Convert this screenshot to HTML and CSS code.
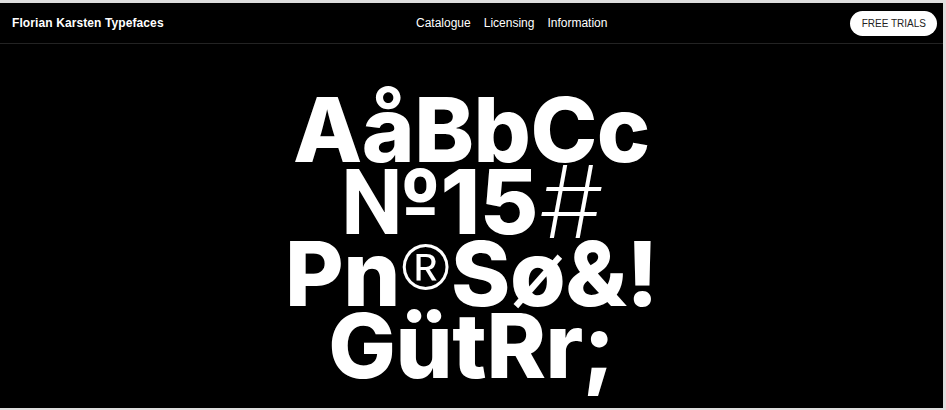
FILE: index.html
```html
<!DOCTYPE html>
<html lang="en">
<head>
<meta charset="utf-8">
<title>Florian Karsten Typefaces</title>
<link rel="stylesheet" href="styles.css">
</head>
<body>
<div class="frame">
  <header class="header">
    <a class="logo" href="#">Florian Karsten Typefaces</a>
    <nav class="nav">
      <a href="#">Catalogue</a>
      <a href="#">Licensing</a>
      <a href="#">Information</a>
    </nav>
    <a class="trials" href="#">FREE TRIALS</a>
  </header>
  <main class="hero">
    <div class="specimen">
      <div class="line">AåBbCc</div>
      <div class="line">№15<span class="hash">#</span></div>
      <div class="line">Pn<span class="reg">®</span>Sø&amp;!</div>
      <div class="line">GütRr;</div>
    </div>
  </main>
</div>
</body>
</html>
```
FILE: styles.css
```css
html, body {
  margin: 0;
  padding: 0;
}
body {
  background: #dedede;
  font-family: "Liberation Sans", Arial, sans-serif;
  width: 946px;
  height: 410px;
  overflow: hidden;
}
.frame {
  margin: 3px 3px 0 0;
  height: 405px;
  background: #000;
  color: #fff;
  overflow: hidden;
}
.header {
  display: flex;
  align-items: center;
  height: 40px;
  border-bottom: 1px solid #232323;
  padding: 0 6px 0 12px;
}
.header a {
  color: #fff;
  text-decoration: none;
}
.logo {
  width: 404px;
  font-weight: 700;
  font-size: 12px;
  letter-spacing: 0.1px;
}
.nav {
  display: flex;
  gap: 13px;
  font-size: 12px;
}
.header .trials {
  margin-left: auto;
  background: #fff;
  color: #222;
  font-size: 10px;
  height: 25px;
  line-height: 26px;
  padding: 0 11px 0 12px;
  border-radius: 13px;
}
.hero {
  display: flex;
  justify-content: center;
  padding-top: 50px;
}
.specimen {
  font-family: "Inter", "Liberation Sans", sans-serif;
  font-weight: 800;
  font-size: 90px;
  line-height: 72px;
  letter-spacing: -0.5px;
  text-align: center;
}
.line {
  white-space: nowrap;
}
.hash {
  font-weight: 200;
  font-style: oblique 14deg;
  font-size: 1.12em;
  line-height: 0;
  vertical-align: -0.04em;
}
.reg {
  font-family: "Liberation Sans", sans-serif;
  font-weight: 400;
  font-size: 0.72em;
  line-height: 0;
  vertical-align: 0.26em;
  margin: 0 2px;
}
```
